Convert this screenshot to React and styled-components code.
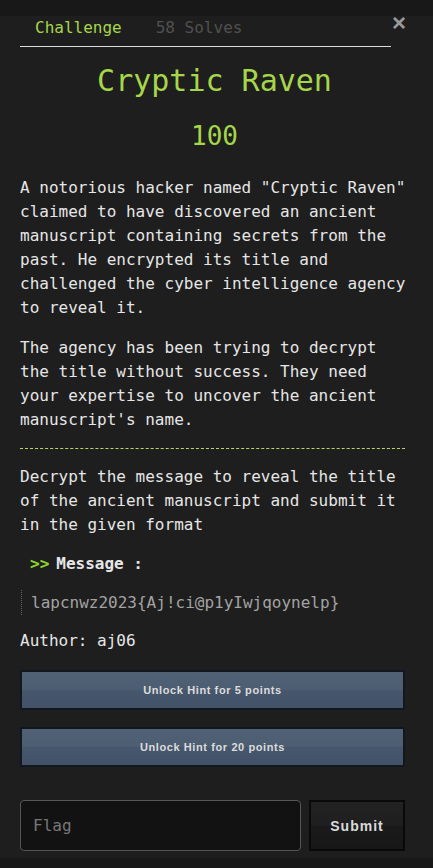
import styled, { createGlobalStyle } from 'styled-components';

const GlobalStyle = createGlobalStyle`
  html, body {
    margin: 0;
    padding: 0;
    background: #1e1e1e;
  }
  * {
    box-sizing: border-box;
  }
`;

const mono = `"DejaVu Sans Mono", "Liberation Mono", monospace`;
const sans = `"Liberation Sans", Arial, sans-serif`;

const hints = [5, 20];

const App = () => {
  return (
    <>
      <GlobalStyle />
      <Page>
        <TopStrip />
        <Modal>
          <Header>
            <TabList>
              <Tab active>Challenge</Tab>
              <Tab>58 Solves</Tab>
            </TabList>
            <Close>×</Close>
          </Header>

          <Title>Cryptic Raven</Title>
          <Points>100</Points>

          <Description first>
            <p>
              A notorious hacker named "Cryptic Raven" claimed to have discovered an ancient
              manuscript containing secrets from the past. He encrypted its title and
              challenged the cyber intelligence agency to reveal it.
            </p>
            <p>
              The agency has been trying to decrypt the title without success. They need
              your expertise to uncover the ancient manuscript's name.
            </p>
          </Description>

          <Divider />

          <Description>
            <p>
              Decrypt the message to reveal the title of the ancient manuscript and submit it
              in the given format
            </p>
          </Description>

          <MessageLabel>
            <Arrows>&gt;&gt;</Arrows>Message :
          </MessageLabel>
          <Code>lapcnwz2023{'{'}Aj!ci@p1yIwjqoynelp{'}'}</Code>

          <Author>Author: aj06</Author>

          <Hints>
            {hints.map((cost) => (
              <HintButton key={cost}>Unlock Hint for {cost} points</HintButton>
            ))}
          </Hints>

          <SubmitRow>
            <FlagInput placeholder="Flag" />
            <SubmitButton>Submit</SubmitButton>
          </SubmitRow>
        </Modal>
        <BottomStrip />
      </Page>
    </>
  );
};

const Page = styled.div`
  width: 433px;
  min-height: 868px;
  background: #1e1e1e;
  display: flex;
  flex-direction: column;
`;

const TopStrip = styled.div`
  height: 16px;
  background: #181818;
`;

const BottomStrip = styled.div`
  height: 10px;
  background: #181818;
`;

const Modal = styled.div`
  flex: 1;
  padding: 0 24px 7px 20px;
  font-family: ${mono};
  color: #e6e6e6;
`;

const Header = styled.div`
  display: flex;
  align-items: flex-start;
`;

const TabList = styled.div`
  width: 371px;
  height: 31px;
  display: flex;
  gap: 4px;
  border-bottom: 1px solid #dcdcdc;
`;

const Tab = styled.div`
  padding: 1px 15px 0;
  font-size: 16px;
  line-height: 22px;
  color: ${(props) => (props.active ? '#a6d64a' : '#505050')};
`;

const Close = styled.div`
  margin-left: 1px;
  margin-top: -5px;
  font-family: ${sans};
  font-weight: bold;
  font-size: 24px;
  line-height: 24px;
  color: #9a9a9a;
`;

const Title = styled.h1`
  margin: 14px 0 0;
  text-align: center;
  font-weight: normal;
  font-size: 30px;
  line-height: 40px;
  color: #a6d64a;
`;

const Points = styled.div`
  margin-top: 20px;
  text-align: center;
  font-size: 26px;
  line-height: 30px;
  color: #a6d64a;
`;

const Description = styled.div`
  font-size: 16px;
  line-height: 24px;
  p {
    margin: 16px 0 0;
  }
  p:first-child {
    margin-top: ${(props) => (props.first ? '25px' : '16px')};
  }
`;

const Divider = styled.div`
  margin: 16px 4px 0 0;
  border-top: 1px dashed #b9d66a;
`;

const MessageLabel = styled.div`
  margin-top: 15px;
  padding-left: 10px;
  font-size: 16px;
  line-height: 24px;
  font-weight: bold;
`;

const Arrows = styled.span`
  color: #8fd12e;
  margin-right: 7px;
`;

const Code = styled.div`
  margin: 14px 0 0 1px;
  padding-left: 9px;
  border-left: 1px dotted #666;
  font-size: 16px;
  line-height: 25px;
  color: #a3a3a3;
`;

const Author = styled.div`
  margin-top: 14px;
  font-size: 16px;
  line-height: 24px;
`;

const Hints = styled.div`
  margin: 17px 4px 0 0;
  display: flex;
  flex-direction: column;
  gap: 17px;
`;

const HintButton = styled.button`
  width: 100%;
  height: 40px;
  border: 2px solid #121820;
  background: linear-gradient(to bottom, #506176 0%, #4d5e73 48%, #46566c 52%, #435268 100%);
  color: #dcdcdc;
  font-family: ${sans};
  font-weight: bold;
  font-size: 11px;
  letter-spacing: 0.6px;
  cursor: pointer;
`;

const SubmitRow = styled.div`
  margin: 33px 4px 0 0;
  display: flex;
  gap: 8px;
`;

const FlagInput = styled.input`
  flex: 1;
  height: 51px;
  padding: 0 12px;
  border: 1px solid #555;
  border-radius: 4px;
  background: #121212;
  color: #ddd;
  font-family: ${mono};
  font-size: 16px;
  outline: none;
  &::placeholder {
    color: #777;
  }
`;

const SubmitButton = styled.button`
  width: 96px;
  height: 51px;
  border: 2px solid #090909;
  background: linear-gradient(to bottom, #222 0%, #1f1f1f 48%, #1a1a1a 52%, #171717 100%);
  color: #dadada;
  font-family: ${sans};
  font-weight: bold;
  font-size: 14px;
  letter-spacing: 1px;
  cursor: pointer;
`;

export default App;
